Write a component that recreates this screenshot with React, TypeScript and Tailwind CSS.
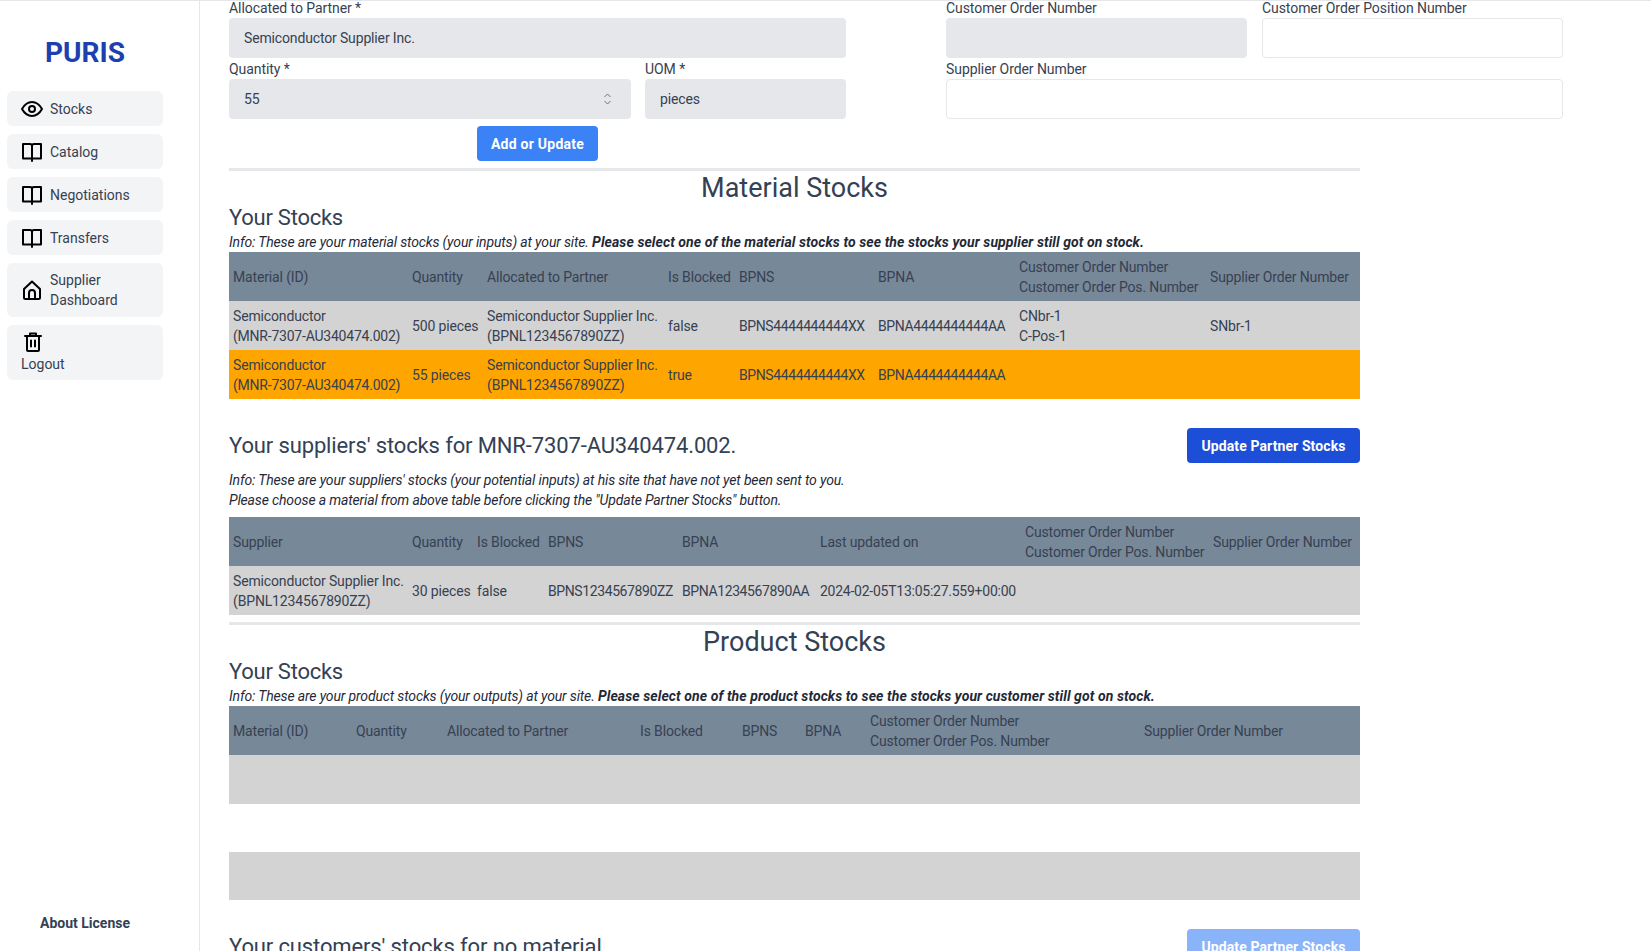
import React from 'react';

function EyeIcon() {
  return (
    <svg width="24" height="24" viewBox="0 0 24 24" fill="none" stroke="currentColor" strokeWidth="2" strokeLinecap="round" strokeLinejoin="round">
      <path d="M2 12c2.600-4.600 6-7 10-7s7.400 2.400 10 7c-2.600 4.600-6 7-10 7s-7.400-2.400-10-7z" />
      <circle cx="12" cy="12" r="3" />
    </svg>
  );
}

function BookIcon() {
  return (
    <svg width="24" height="24" viewBox="0 0 24 24" fill="none" stroke="currentColor" strokeWidth="2" strokeLinejoin="round" strokeLinecap="round">
      <path d="M12 21v-2.500H3V4h7a2 2 0 0 1 2 2v12.500" />
      <path d="M12 18.500h9V4h-7a2 2 0 0 0-2 2" />
    </svg>
  );
}

function HomeIcon() {
  return (
    <svg width="24" height="24" viewBox="0 0 24 24" fill="none" stroke="currentColor" strokeWidth="2" strokeLinejoin="round" strokeLinecap="round">
      <path d="M4 11l8-7.500 8 7.500v8.500a1.500 1.500 0 0 1-1.500 1.500h-13A1.500 1.500 0 0 1 4 19.500z" />
      <path d="M9 21v-6a3 3 0 0 1 6 0v6" />
    </svg>
  );
}

function TrashIcon() {
  return (
    <svg width="24" height="24" viewBox="0 0 24 24" fill="none" stroke="currentColor" strokeWidth="2" strokeLinejoin="round" strokeLinecap="round">
      <path d="M4 6h16" />
      <path d="M9 6V3.500h6V6" />
      <path d="M6 6v14a1 1 0 0 0 1 1h10a1 1 0 0 0 1-1V6" />
      <path d="M10 10.500v6M14 10.500v6" />
    </svg>
  );
}

function NavItem({ icon, label, tall }: { icon: React.ReactNode; label: React.ReactNode; tall?: boolean }) {
  return (
    <div className={`flex items-center gap-[6px] rounded-md bg-[#f3f4f6] px-[13px] text-sm leading-5 text-[#374151] ${tall ? 'h-[54px]' : 'h-[35px]'}`}>
      <span className="shrink-0 text-black">{icon}</span>
      <span>{label}</span>
    </div>
  );
}

function Sidebar() {
  return (
    <aside className="flex h-full w-[200px] shrink-0 flex-col border-r border-[#e5e7eb] pb-[18px] pl-[7px] pr-[36px]">
      <div className="pt-[36px] pb-[22px] text-center text-[28px] font-bold leading-8 text-[#1e40af]">PURIS</div>
      <nav className="flex flex-col gap-2">
        <NavItem icon={<EyeIcon />} label="Stocks" />
        <NavItem icon={<BookIcon />} label="Catalog" />
        <NavItem icon={<BookIcon />} label="Negotiations" />
        <NavItem icon={<BookIcon />} label="Transfers" />
        <NavItem icon={<HomeIcon />} label={<>Supplier<br />Dashboard</>} tall />
        <div className="h-[55px] rounded-md bg-[#f3f4f6] pl-[14px] pt-[5px] text-sm leading-5 text-[#374151]">
          <span className="block text-black"><TrashIcon /></span>
          <span className="block">Logout</span>
        </div>
      </nav>
      <div className="mt-auto text-center text-sm font-bold leading-5 text-[#334155]">About License</div>
    </aside>
  );
}

function Field({ label, value, filled, className, spinner }: { label: string; value?: string; filled?: boolean; className?: string; spinner?: boolean }) {
  return (
    <div className={className}>
      <div className="text-sm leading-5 tracking-[-0.07px] text-[#374151]">{label}</div>
      <div className={`relative h-10 rounded px-[15px] text-sm leading-10 tracking-[-0.15px] text-[#374151] ${filled ? 'bg-[#e5e7eb]' : 'border border-[#e5e7eb] bg-white'}`}>
        {value}
        {spinner && (
          <svg className="absolute right-[19px] top-[13px]" width="9" height="14" viewBox="0 0 9 14" fill="none" stroke="#6b7280" strokeWidth="1">
            <path d="M1.500 5l3-3 3 3M1.500 9l3 3 3-3" />
          </svg>
        )}
      </div>
    </div>
  );
}

function StockForm() {
  return (
    <div className="-mt-[3px] flex h-[170px]">
      <div className="flex w-[617px] flex-col gap-[1px]">
        <Field label="Allocated to Partner *" value="Semiconductor Supplier Inc." filled />
        <div className="flex gap-[14px]">
          <Field label="Quantity *" value="55" filled spinner className="w-[402px]" />
          <Field label="UOM *" value="pieces" filled className="w-[201px]" />
        </div>
        <button className="mx-auto mt-[6px] h-[35px] w-[121px] rounded bg-[#3b82f6] text-sm font-bold tracking-[0.25px] text-white">Add or Update</button>
      </div>
      <div className="ml-[100px] flex w-[617px] flex-col gap-[1px]">
        <div className="flex gap-[15px]">
          <Field label="Customer Order Number" filled className="w-[301px]" />
          <Field label="Customer Order Position Number" className="w-[301px]" />
        </div>
        <Field label="Supplier Order Number" />
      </div>
    </div>
  );
}

type Cell = React.ReactNode;

function StockTable({ widths, head, rows }: { widths: number[]; head: Cell[]; rows: { cells: Cell[]; highlight?: boolean; gap?: boolean; short?: boolean }[] }) {
  return (
    <table className="w-[1131px] table-fixed border-collapse text-sm leading-5 tracking-[-0.15px] text-[#374151]">
      <colgroup>
        {widths.map((w, i) => (
          <col key={i} style={{ width: w }} />
        ))}
      </colgroup>
      <thead>
        <tr className="h-[49px] bg-[#778899]">
          {head.map((c, i) => (
            <th key={i} className="whitespace-nowrap px-1 text-left font-normal">{c}</th>
          ))}
        </tr>
      </thead>
      <tbody>
        {rows.map((r, i) => (
          <tr key={i} className={`${r.short ? 'h-[48px]' : 'h-[49px]'} ${r.gap ? 'bg-white' : r.highlight ? 'bg-[#ffa500]' : 'bg-[#d3d3d3]'}`}>
            {r.cells.map((c, j) => (
              <td key={j} className="whitespace-nowrap px-1">{c}</td>
            ))}
          </tr>
        ))}
      </tbody>
    </table>
  );
}

// id columns run wider in Roboto than in the screenshot
function Id({ children }: { children: React.ReactNode }) {
  return <span className="tracking-[-0.4px]">{children}</span>;
}

const custHead = <>Customer Order Number<br />Customer Order Pos. Number</>;
const semi = <>Semiconductor<br /><span className="tracking-[-0.22px]">(MNR-7307-AU340474.002)</span></>;
const partner = <>Semiconductor Supplier Inc.<br />(BPNL1234567890ZZ)</>;
const blank = ['', '', '', '', '', '', '', ''];

function Info({ children }: { children: React.ReactNode }) {
  return <p className="text-sm italic leading-5 tracking-[-0.15px] text-[#1f2937]">{children}</p>;
}

function Strong({ children }: { children: React.ReactNode }) {
  return <b className="tracking-[0.09px]">{children}</b>;
}

function SectionHeading({ children }: { children: React.ReactNode }) {
  return <h2 className="text-center text-[27px] leading-[34px] text-[#334155]">{children}</h2>;
}

function SubHeading({ children }: { children: React.ReactNode }) {
  return <h3 className="-mt-[1px] mb-[1px] text-[22px] leading-[27px] tracking-[-0.25px] text-[#334155]">{children}</h3>;
}

function PartnerHeader({ title, buttonClass }: { title: string; buttonClass: string }) {
  return (
    <div className="mt-[29px] flex items-center justify-between">
      <h3 className="text-[22px] leading-[35px] tracking-[-0.13px] text-[#334155]">{title}</h3>
      <button className={`h-[35px] w-[173px] rounded text-sm font-bold tracking-[0.1px] text-white ${buttonClass}`}>Update Partner Stocks</button>
    </div>
  );
}

export default function App() {
  return (
    <div className="flex h-[951px] w-[1651px] overflow-hidden border-t border-[#e5e7eb] bg-white font-[Roboto,sans-serif]">
      <Sidebar />
      <main className="ml-[29px] min-w-0 flex-1">
        <StockForm />
        <div className="w-[1131px]">
          <hr className="h-[3px] border-0 bg-[#e5e7eb]" />
          <SectionHeading>Material Stocks</SectionHeading>
          <SubHeading>Your Stocks</SubHeading>
          <Info>
            Info: These are your material stocks (your inputs) at your site. <Strong>Please select one of the material stocks to see the stocks your supplier still got on stock.</Strong>
          </Info>
          <StockTable
            widths={[179, 75, 181, 71, 139, 141, 191, 154]}
            head={['Material (ID)', 'Quantity', 'Allocated to Partner', 'Is Blocked', 'BPNS', 'BPNA', custHead, 'Supplier Order Number']}
            rows={[
              { cells: [semi, '500 pieces', partner, 'false', <Id>BPNS4444444444XX</Id>, <Id>BPNA4444444444AA</Id>, <>CNbr-1<br />C-Pos-1</>, 'SNbr-1'] },
              { cells: [semi, '55 pieces', partner, 'true', <Id>BPNS4444444444XX</Id>, <Id>BPNA4444444444AA</Id>, '', ''], highlight: true },
            ]}
          />
          <PartnerHeader title="Your suppliers' stocks for MNR-7307-AU340474.002." buttonClass="bg-[#1d4ed8]" />
          <div className="mt-[7px]">
            <Info>Info: These are your suppliers' stocks (your potential inputs) at his site that have not yet been sent to you.</Info>
            <Info>Please choose a material from above table before clicking the "Update Partner Stocks" button.</Info>
          </div>
          <div className="mt-[7px]">
            <StockTable
              widths={[179, 65, 71, 134, 138, 205, 188, 151]}
              head={['Supplier', 'Quantity', 'Is Blocked', 'BPNS', 'BPNA', 'Last updated on', custHead, 'Supplier Order Number']}
              rows={[{ cells: [partner, '30 pieces', 'false', <Id>BPNS1234567890ZZ</Id>, <Id>BPNA1234567890AA</Id>, <span className="tracking-[-0.25px]">2024-02-05T13:05:27.559+00:00</span>, '', ''] }]}
            />
          </div>
          <hr className="mt-[7px] h-[3px] border-0 bg-[#e5e7eb]" />
          <SectionHeading>Product Stocks</SectionHeading>
          <SubHeading>Your Stocks</SubHeading>
          <Info>
            Info: These are your product stocks (your outputs) at your site. <Strong>Please select one of the product stocks to see the stocks your customer still got on stock.</Strong>
          </Info>
          <StockTable
            widths={[123, 91, 193, 102, 63, 65, 274, 220]}
            head={['Material (ID)', 'Quantity', 'Allocated to Partner', 'Is Blocked', 'BPNS', 'BPNA', custHead, 'Supplier Order Number']}
            rows={[{ cells: blank }, { cells: blank, gap: true, short: true }, { cells: blank, short: true }]}
          />
          <PartnerHeader title="Your customers' stocks for no material" buttonClass="bg-[#89b4fa]" />
        </div>
      </main>
    </div>
  );
}
